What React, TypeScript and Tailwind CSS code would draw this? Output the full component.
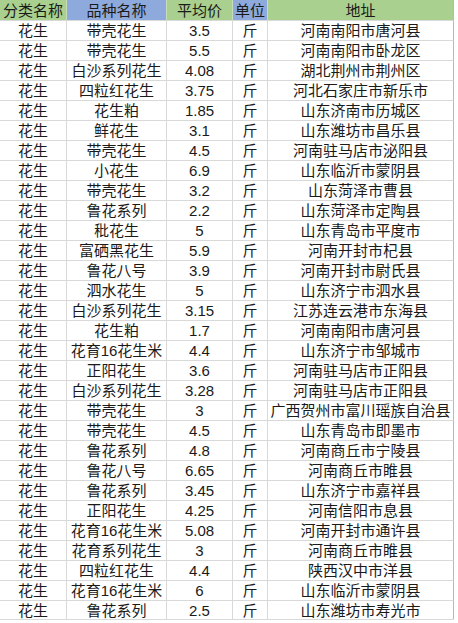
const rows: [string, string, string, string, string][] = [
  ["花生", "带壳花生", "3.5", "斤", "河南南阳市唐河县"],
  ["花生", "带壳花生", "5.5", "斤", "河南南阳市卧龙区"],
  ["花生", "白沙系列花生", "4.08", "斤", "湖北荆州市荆州区"],
  ["花生", "四粒红花生", "3.75", "斤", "河北石家庄市新乐市"],
  ["花生", "花生粕", "1.85", "斤", "山东济南市历城区"],
  ["花生", "鲜花生", "3.1", "斤", "山东潍坊市昌乐县"],
  ["花生", "带壳花生", "4.5", "斤", "河南驻马店市泌阳县"],
  ["花生", "小花生", "6.9", "斤", "山东临沂市蒙阴县"],
  ["花生", "带壳花生", "3.2", "斤", "山东菏泽市曹县"],
  ["花生", "鲁花系列", "2.2", "斤", "山东菏泽市定陶县"],
  ["花生", "秕花生", "5", "斤", "山东青岛市平度市"],
  ["花生", "富硒黑花生", "5.9", "斤", "河南开封市杞县"],
  ["花生", "鲁花八号", "3.9", "斤", "河南开封市尉氏县"],
  ["花生", "泗水花生", "5", "斤", "山东济宁市泗水县"],
  ["花生", "白沙系列花生", "3.15", "斤", "江苏连云港市东海县"],
  ["花生", "花生粕", "1.7", "斤", "河南南阳市唐河县"],
  ["花生", "花育16花生米", "4.4", "斤", "山东济宁市邹城市"],
  ["花生", "正阳花生", "3.6", "斤", "河南驻马店市正阳县"],
  ["花生", "白沙系列花生", "3.28", "斤", "河南驻马店市正阳县"],
  ["花生", "带壳花生", "3", "斤", "广西贺州市富川瑶族自治县"],
  ["花生", "带壳花生", "4.5", "斤", "山东青岛市即墨市"],
  ["花生", "鲁花系列", "4.8", "斤", "河南商丘市宁陵县"],
  ["花生", "鲁花八号", "6.65", "斤", "河南商丘市睢县"],
  ["花生", "鲁花系列", "3.45", "斤", "山东济宁市嘉祥县"],
  ["花生", "正阳花生", "4.25", "斤", "河南信阳市息县"],
  ["花生", "花育16花生米", "5.08", "斤", "河南开封市通许县"],
  ["花生", "花育系列花生", "3", "斤", "河南商丘市睢县"],
  ["花生", "四粒红花生", "4.4", "斤", "陕西汉中市洋县"],
  ["花生", "花育16花生米", "6", "斤", "山东临沂市蒙阴县"],
  ["花生", "鲁花系列", "2.5", "斤", "山东潍坊市寿光市"],
];

const headers = [
  { label: "分类名称", bg: "bg-[#a9d08e]" },
  { label: "品种名称", bg: "bg-[#8ea9db]" },
  { label: "平均价", bg: "bg-[#a9d08e]" },
  { label: "单位", bg: "bg-[#8ea9db]" },
  { label: "地址", bg: "bg-[#a9d08e]" },
];

const cols = "grid grid-cols-[67px_100px_66px_35px_186px]";

export default function App() {
  return (
    <div className="w-[458px] h-[623px] bg-white text-[15px] leading-none text-[#1a1a1a] font-['Liberation_Sans','Noto_Sans_CJK_SC',sans-serif]">
      <div className={`${cols} h-[20px]`}>
        {headers.map((h) => (
          <div
            key={h.label}
            className={`${h.bg} flex items-center justify-center border-r border-[#c9dcbc] last:border-[#b8b8b8]`}
          >
            {h.label}
          </div>
        ))}
      </div>
      <div className="border-b border-[#d9d9d9] w-[454px]">
        {rows.map((r, i) => (
          <div key={i} className={`${cols} h-[20px] last:h-[19px]`}>
            {r.map((c, j) => (
              <div
                key={j}
                className="flex items-center justify-center border-t border-r border-[#d9d9d9] last:border-r-[#b8b8b8]"
              >
                {c}
              </div>
            ))}
          </div>
        ))}
      </div>
    </div>
  );
}
